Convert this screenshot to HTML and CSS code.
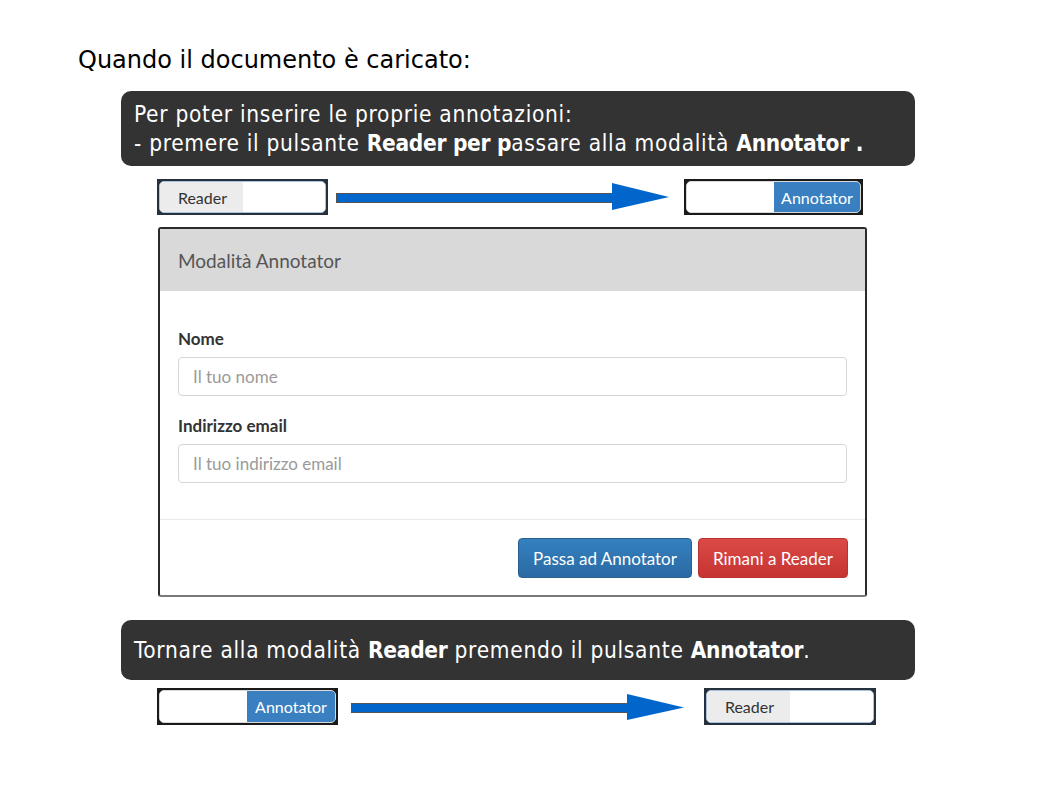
FILE: index.html
```html
<!DOCTYPE html>
<html lang="it">
<head>
<meta charset="utf-8">
<title>Annotator</title>
<link rel="stylesheet" href="styles.css">
</head>
<body>
<div class="page">
  <h1 class="title">Quando il documento è caricato:</h1>

  <div class="callout callout-1">
    <p>Per poter inserire le proprie annotazioni:</p>
    <p>- premere il pulsante <b>Reader per p</b>assare alla modalità <b>Annotator .</b></p>
  </div>

  <div class="row row-1">
    <div class="toggle toggle-reader t1">
      <div class="toggle-inner">
        <span class="seg seg-reader">Reader</span>
        <span class="seg seg-blank"></span>
      </div>
    </div>
    <svg class="arrow a1" width="334" height="36" viewBox="0 0 334 36">
      <rect x="0.5" y="14.5" width="278" height="9" fill="#0066cc" stroke="#555" stroke-width="1"/>
      <polygon points="276,4 333,18 276,31" fill="#0066cc"/>
    </svg>
    <div class="toggle toggle-annot t2">
      <div class="toggle-inner">
        <span class="seg seg-blank"></span>
        <span class="seg seg-annot">Annotator</span>
      </div>
    </div>
  </div>

  <div class="modal">
    <div class="modal-header">Modalità Annotator</div>
    <div class="modal-body">
      <label class="label">Nome</label>
      <div class="input">Il tuo nome</div>
      <label class="label label-2">Indirizzo email</label>
      <div class="input">Il tuo indirizzo email</div>
    </div>
    <div class="modal-footer">
      <span class="btn btn-primary">Passa ad Annotator</span>
      <span class="btn btn-danger">Rimani a Reader</span>
    </div>
  </div>

  <div class="callout callout-2">
    <p>Tornare alla modalità <b>Reader</b> premendo il pulsante <b>Annotator</b>.</p>
  </div>

  <div class="row row-2">
    <div class="toggle toggle-annot t3">
      <div class="toggle-inner">
        <span class="seg seg-blank"></span>
        <span class="seg seg-annot">Annotator</span>
      </div>
    </div>
    <svg class="arrow a2" width="334" height="37" viewBox="0 0 334 37">
      <rect x="0.5" y="15.5" width="278" height="9" fill="#0066cc" stroke="#555" stroke-width="1"/>
      <polygon points="276,6 333,19.5 276,32" fill="#0066cc"/>
    </svg>
    <div class="toggle toggle-reader t4">
      <div class="toggle-inner">
        <span class="seg seg-reader">Reader</span>
        <span class="seg seg-blank"></span>
      </div>
    </div>
  </div>
</div>
</body>
</html>
```

FILE: styles.css
```css
* { box-sizing: border-box; }
html, body { margin: 0; padding: 0; background: #ffffff; }
body { width: 1058px; height: 794px; overflow: hidden; }

.page {
  display: flex;
  flex-direction: column;
  align-items: flex-start;
  padding-top: 43px;
}

.title {
  margin: 2px 0 0 78px;
  font-family: "DejaVu Sans", sans-serif;
  font-weight: normal;
  font-size: 24px;
  line-height: 30px;
  color: #000;
}

.callout {
  margin-left: 121px;
  width: 794px;
  background: #333333;
  border-radius: 10px;
  color: #ffffff;
  font-family: "DejaVu Sans Condensed", "DejaVu Sans", sans-serif;
  font-size: 22.5px;
  letter-spacing: 0.7px;
  line-height: 29px;
  padding: 9px 13px 0 13px;
}
.callout p { margin: 0; white-space: nowrap; }
.callout b { font-weight: bold; letter-spacing: -0.3px; }
.callout-1 { margin-top: 16px; height: 75px; }
.callout-2 { margin-top: 23px; height: 60px; padding-top: 16px; }

.row {
  display: flex;
  align-items: flex-start;
  margin-left: 157px;
}
.row-1 { margin-top: 13px; height: 36px; }
.row-2 { margin-top: 8px; height: 37px; }

.arrow { display: block; flex: none; }
.a1 { margin-left: 8px; }
.a1 + .toggle { margin-left: 14px; }
.a2 { margin-left: 13px; }
.a2 + .toggle { margin-left: 19px; }

.toggle {
  flex: none;
  background: #26313d;
  padding: 2px;
  height: 36px;
}
.t3, .t4 { height: 37px; }
.t1 { width: 171px; }
.t2 { width: 179px; background: #1a1a1a; }
.t3 { width: 181px; background: #1a1a1a; }
.t4 { width: 172px; }

.toggle-inner {
  display: flex;
  height: 100%;
  border-radius: 5px;
  border: 1px solid #a9c4de;
  background: #ffffff;
  overflow: hidden;
  font-family: "Lato", "DejaVu Sans", sans-serif;
  font-size: 16px;
}
.toggle-annot .toggle-inner { border-color: #d8d8d8; }

.seg {
  display: flex;
  align-items: center;
  justify-content: center;
  height: 100%;
}
.seg-blank { flex: 1; background: #ffffff; }
.seg-reader { width: 83px; background: #ececec; color: #333333; padding-left: 2px; }
.seg-annot { width: 86px; background: #3a7fc0; color: #ffffff; }
.t3 .seg-annot { width: 88px; }

.modal {
  margin-top: 12px;
  margin-left: 158px;
  width: 709px;
  height: 370px;
  border: 2px solid #2a2a2a;
  border-bottom-color: #7a7a7a;
  border-radius: 3px;
  background: #ffffff;
  display: flex;
  flex-direction: column;
  font-family: "Lato", "DejaVu Sans", sans-serif;
}

.modal-header {
  height: 62px;
  background: #d9d9d9;
  color: #555555;
  font-size: 19px;
  padding-left: 18px;
  display: flex;
  align-items: center;
}

.modal-body {
  padding: 37px 18px 0 18px;
  height: 229px;
  border-bottom: 1px solid #e9e9e9;
  display: flex;
  flex-direction: column;
}

.label {
  font-size: 17px;
  font-weight: bold;
  color: #333333;
  line-height: 22px;
  margin-bottom: 7px;
}
.label-2 { margin-top: 19px; }

.input {
  width: 669px;
  height: 39px;
  border: 1px solid #d6d6d6;
  border-radius: 4px;
  padding-left: 14px;
  font-size: 17px;
  color: #9a9a9a;
  display: flex;
  align-items: center;
}

.modal-footer {
  flex: 1;
  display: flex;
  justify-content: flex-end;
  align-items: flex-start;
  gap: 6px;
  padding: 18px 17px 0 0;
}

.btn {
  height: 40px;
  display: flex;
  align-items: center;
  justify-content: center;
  font-size: 17px;
  color: #ffffff;
  border-radius: 4px;
}
.btn-primary {
  width: 174px;
  background: linear-gradient(#3580c0, #2a6aa3);
  border: 1px solid #2a5f90;
}
.btn-danger {
  width: 150px;
  background: linear-gradient(#dc4a48, #c63431);
  border: 1px solid #b93330;
}
```
